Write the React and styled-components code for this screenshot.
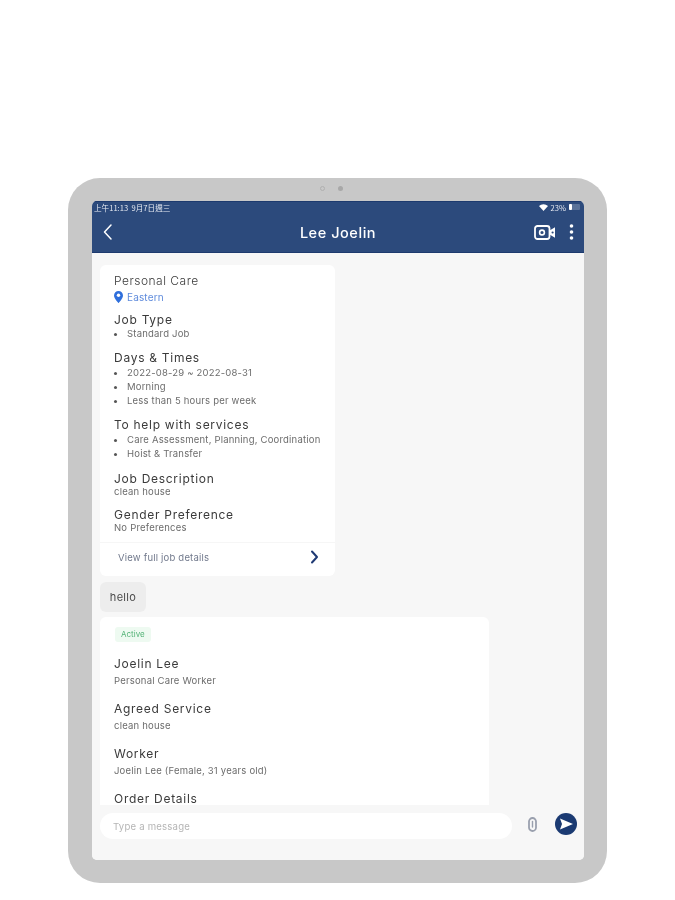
import styled, { createGlobalStyle } from "styled-components";

const navy = "#2c4a7c";

const GlobalStyle = createGlobalStyle`
  html, body {
    margin: 0;
    background: #fff;
  }
  body {
    font-family: Inter, "Noto Sans", sans-serif;
  }
`;

const Page = styled.div`
  width: 675px;
  height: 900px;
  padding: 178px 68px 17px;
  box-sizing: border-box;
  overflow: hidden;
`;

const Device = styled.div`
  position: relative;
  width: 539px;
  height: 705px;
  padding: 23px 23px 23px 24px;
  box-sizing: border-box;
  background: #c8c8c8;
  border-radius: 32px;
  filter: blur(0.45px);
`;

const CameraDot = styled.span`
  position: absolute;
  top: 8px;
  left: ${(p) => p.$left}px;
  width: 5px;
  height: 5px;
  border-radius: 50%;
  background: ${(p) => (p.$ring ? "transparent" : "#a8a8a8")};
  border: 1px solid ${(p) => (p.$ring ? "#b0b0b0" : "transparent")};
  box-sizing: border-box;
`;

const Screen = styled.div`
  display: flex;
  flex-direction: column;
  height: 100%;
  background: #f7f7f7;
  border-radius: 5px;
  overflow: hidden;
`;

const Header = styled.header`
  flex: none;
  height: 52px;
  background: ${navy};
  border-top: 1px solid #1d3a6e;
  border-bottom: 1px solid #1d3a6e;
  box-sizing: border-box;
  color: #fff;
`;

const StatusBar = styled.div`
  display: flex;
  align-items: center;
  justify-content: space-between;
  height: 10px;
  padding: 0 4px 0 2px;
  font: 7.6px "Noto Sans CJK TC", sans-serif;
  color: #e4e8f0;
`;

const StatusRight = styled.div`
  display: flex;
  align-items: center;
  gap: 3px;
`;

const Toolbar = styled.div`
  display: grid;
  grid-template-columns: 1fr auto 1fr;
  align-items: center;
  height: 40px;
  padding: 0 10px;
`;

const Title = styled.h1`
  margin: 0;
  font-size: 14.5px;
  font-weight: 500;
  letter-spacing: 0.55px;
`;

const ToolbarIcons = styled.div`
  display: flex;
  align-items: center;
  justify-content: flex-end;
  gap: 14px;
`;

const Messages = styled.div`
  flex: 1;
  min-height: 0;
  overflow: hidden;
  display: flex;
  flex-direction: column;
  align-items: flex-start;
  padding: 12px 0 0 8px;
`;

const Card = styled.div`
  flex: none;
  width: ${(p) => p.$width}px;
  background: #fff;
  border-radius: 6px;
  box-sizing: border-box;
`;

const CardBody = styled.div`
  padding: 9px 10px 0 14px;
`;

const Heading = styled.div`
  font-size: 12px;
  line-height: 14px;
  letter-spacing: ${(p) => (p.$light ? "0.5px" : "0.72px")};
  font-weight: ${(p) => (p.$light ? 300 : 400)};
  color: #3a3a3a;
`;

const Section = styled.div`
  margin-top: ${(p) => p.$gap ?? 10}px;
`;

const Text = styled.div`
  font-size: 9.5px;
  line-height: 13px;
  letter-spacing: 0.2px;
  color: #6c6c6c;
  margin-top: -1px;
`;

const Location = styled.div`
  display: flex;
  align-items: center;
  gap: 4px;
  height: 16px;
  margin-top: 1px;
  font-size: 10px;
  letter-spacing: 0.15px;
  color: #5f8bdc;
`;

const List = styled.ul`
  margin: ${(p) => (p.$spaced ? 1 : 0)}px 0 0;
  padding: 0;
  list-style: none;
`;

const Item = styled.li`
  display: flex;
  align-items: center;
  gap: 10px;
  font-size: 9.5px;
  line-height: 14px;
  letter-spacing: 0.2px;
  color: #6c6c6c;
  white-space: nowrap;

  &::before {
    content: "";
    flex: none;
    width: 3px;
    height: 3px;
    border-radius: 50%;
    background: #555;
  }
`;

const CardFooter = styled.div`
  display: flex;
  align-items: center;
  justify-content: space-between;
  height: 34px;
  margin-top: 8px;
  padding: 0 16px 5px 18px;
  box-sizing: border-box;
  border-top: 1px solid #f6f6f6;
  font-size: 9.5px;
  letter-spacing: 0.2px;
  color: #71798c;
`;

const Bubble = styled.div`
  flex: none;
  margin: 6px 0 5px;
  width: 46px;
  height: 30px;
  display: flex;
  align-items: center;
  justify-content: center;
  border-radius: 6px;
  background: #ededed;
  font-size: 11px;
  letter-spacing: 0.3px;
  color: #4a4a4a;
`;

const Badge = styled.span`
  display: inline-block;
  margin: 10px 0 0 15px;
  padding: 0 6px;
  height: 15px;
  line-height: 15px;
  border-radius: 3px;
  background: #eefaf1;
  font-size: 8px;
  color: #54b377;
`;

const DetailList = styled.div`
  padding: 15px 10px 0 14px;
`;

const Detail = styled.div`
  height: 45px;
`;

const DetailText = styled.div`
  margin-top: 3px;
  font-size: 9.5px;
  line-height: 14px;
  letter-spacing: 0.2px;
  color: #6c6c6c;
`;

const Composer = styled.div`
  flex: none;
  height: 55px;
  display: flex;
  align-items: center;
  padding: 0 8px 13px;
  box-sizing: border-box;
  background: #f7f7f7;
`;

const Input = styled.div`
  flex: none;
  width: 412px;
  height: 26px;
  display: flex;
  align-items: center;
  padding-left: 13px;
  box-sizing: border-box;
  background: #fff;
  border-radius: 13px;
  font-size: 9.6px;
  letter-spacing: 0.2px;
  color: #b5b5b5;
`;

const ClipButton = styled.div`
  display: flex;
  margin: 0 0 4px 16px;
`;

const SendButton = styled.div`
  display: flex;
  margin: 0 0 4px 18px;
`;

const ChevronLeft = () => (
  <svg width="12" height="18" viewBox="0 0 12 18" fill="none" stroke="#fff" strokeWidth="1.5" strokeLinecap="round" strokeLinejoin="round">
    <path d="M9 2 2.5 9 9 16" />
  </svg>
);

const VideoIcon = () => (
  <svg width="21" height="15" viewBox="0 0 21 15" fill="none">
    <rect x="1" y="1" width="14.5" height="13" rx="2.5" stroke="#fff" strokeWidth="1.8" />
    <circle cx="8" cy="7.5" r="2.4" stroke="#fff" strokeWidth="1.6" />
    <path d="M15.5 5.5 21 2.2V12.8L15.5 9.5Z" fill="#fff" />
    <circle cx="18.6" cy="7.5" r="1.1" fill={navy} />
  </svg>
);

const MoreIcon = () => (
  <svg width="5" height="18" viewBox="0 0 5 18" fill="#fff">
    <circle cx="2.5" cy="3" r="1.8" />
    <circle cx="2.5" cy="9" r="1.8" />
    <circle cx="2.5" cy="15" r="1.8" />
  </svg>
);

const PinIcon = () => (
  <svg width="9" height="12" viewBox="0 0 9 12">
    <path d="M4.5 0C2 0 0 2 0 4.4 0 7.3 4.5 12 4.5 12S9 7.3 9 4.4C9 2 7 0 4.5 0Z" fill="#2f6fdc" />
    <circle cx="4.5" cy="4.3" r="1.7" fill="#fff" />
  </svg>
);

const ChevronRight = () => (
  <svg width="9" height="14" viewBox="0 0 9 14" fill="none" stroke="#1f3a74" strokeWidth="2" strokeLinecap="round" strokeLinejoin="round">
    <path d="M2 1.5 7 7 2 12.5" />
  </svg>
);

const ClipIcon = () => (
  <svg width="9" height="15" viewBox="0 0 9 15" fill="none" stroke="#9aa0ae" strokeLinecap="round">
    <rect x="1" y="1" width="7" height="13" rx="3.5" strokeWidth="1.8" />
    <path d="M4.5 4.5v5.5" strokeWidth="1.4" />
  </svg>
);

const SendIcon = () => (
  <svg width="22" height="22" viewBox="0 0 22 22">
    <circle cx="11" cy="11" r="11" fill="#1b3a72" />
    <path d="M5 5.5 18 11 5 16.5 7 11Z" fill="#fff" />
  </svg>
);

const WifiIcon = () => (
  <svg width="9" height="7" viewBox="0 0 9 7" fill="#fff">
    <path d="M0 2a6.5 6.5 0 0 1 9 0L4.5 7Z" />
  </svg>
);

const BatteryIcon = () => (
  <svg width="11" height="6" viewBox="0 0 11 6">
    <rect x="0" y="0" width="11" height="6" rx="1" fill="#5a7299" />
    <rect x="0" y="0" width="3" height="6" rx="1" fill="#fff" />
  </svg>
);

const jobSections = [
  { title: "Job Type", items: ["Standard Job"] },
  { title: "Days & Times", items: ["2022-08-29 ~ 2022-08-31", "Morning", "Less than 5 hours per week"] },
  { title: "To help with services", items: ["Care Assessment, Planning, Coordination", "Hoist & Transfer"] },
];

const details = [
  { title: "Joelin Lee", text: "Personal Care Worker" },
  { title: "Agreed Service", text: "clean house" },
  { title: "Worker", text: "Joelin Lee (Female, 31 years old)" },
  { title: "Order Details", text: "" },
];

function App() {
  return (
    <Page>
      <GlobalStyle />
      <Device>
        <CameraDot $left={252} $ring />
        <CameraDot $left={270} />
        <Screen>
          <Header>
            <StatusBar>
              <span>上午11:13 &nbsp;9月7日週三</span>
              <StatusRight>
                <WifiIcon />
                <span>23%</span>
                <BatteryIcon />
              </StatusRight>
            </StatusBar>
            <Toolbar>
              <ChevronLeft />
              <Title>Lee Joelin</Title>
              <ToolbarIcons>
                <VideoIcon />
                <MoreIcon />
              </ToolbarIcons>
            </Toolbar>
          </Header>
          <Messages>
            <Card $width={235}>
              <CardBody>
                <Heading $light>Personal Care</Heading>
                <Location>
                  <PinIcon />
                  Eastern
                </Location>
                {jobSections.map((section, index) => (
                  <Section key={section.title} $gap={index === 0 ? 8 : 10}>
                    <Heading>{section.title}</Heading>
                    <List $spaced={section.items.length > 1}>
                      {section.items.map((item) => (
                        <Item key={item}>{item}</Item>
                      ))}
                    </List>
                  </Section>
                ))}
                <Section $gap={11}>
                  <Heading>Job Description</Heading>
                  <Text>clean house</Text>
                </Section>
                <Section>
                  <Heading>Gender Preference</Heading>
                  <Text>No Preferences</Text>
                </Section>
              </CardBody>
              <CardFooter>
                View full job details
                <ChevronRight />
              </CardFooter>
            </Card>
            <Bubble>hello</Bubble>
            <Card $width={389}>
              <Badge>Active</Badge>
              <DetailList>
                {details.map((detail) => (
                  <Detail key={detail.title}>
                    <Heading>{detail.title}</Heading>
                    {detail.text && <DetailText>{detail.text}</DetailText>}
                  </Detail>
                ))}
              </DetailList>
            </Card>
          </Messages>
          <Composer>
            <Input>Type a message</Input>
            <ClipButton>
              <ClipIcon />
            </ClipButton>
            <SendButton>
              <SendIcon />
            </SendButton>
          </Composer>
        </Screen>
      </Device>
    </Page>
  );
}

export default App;
